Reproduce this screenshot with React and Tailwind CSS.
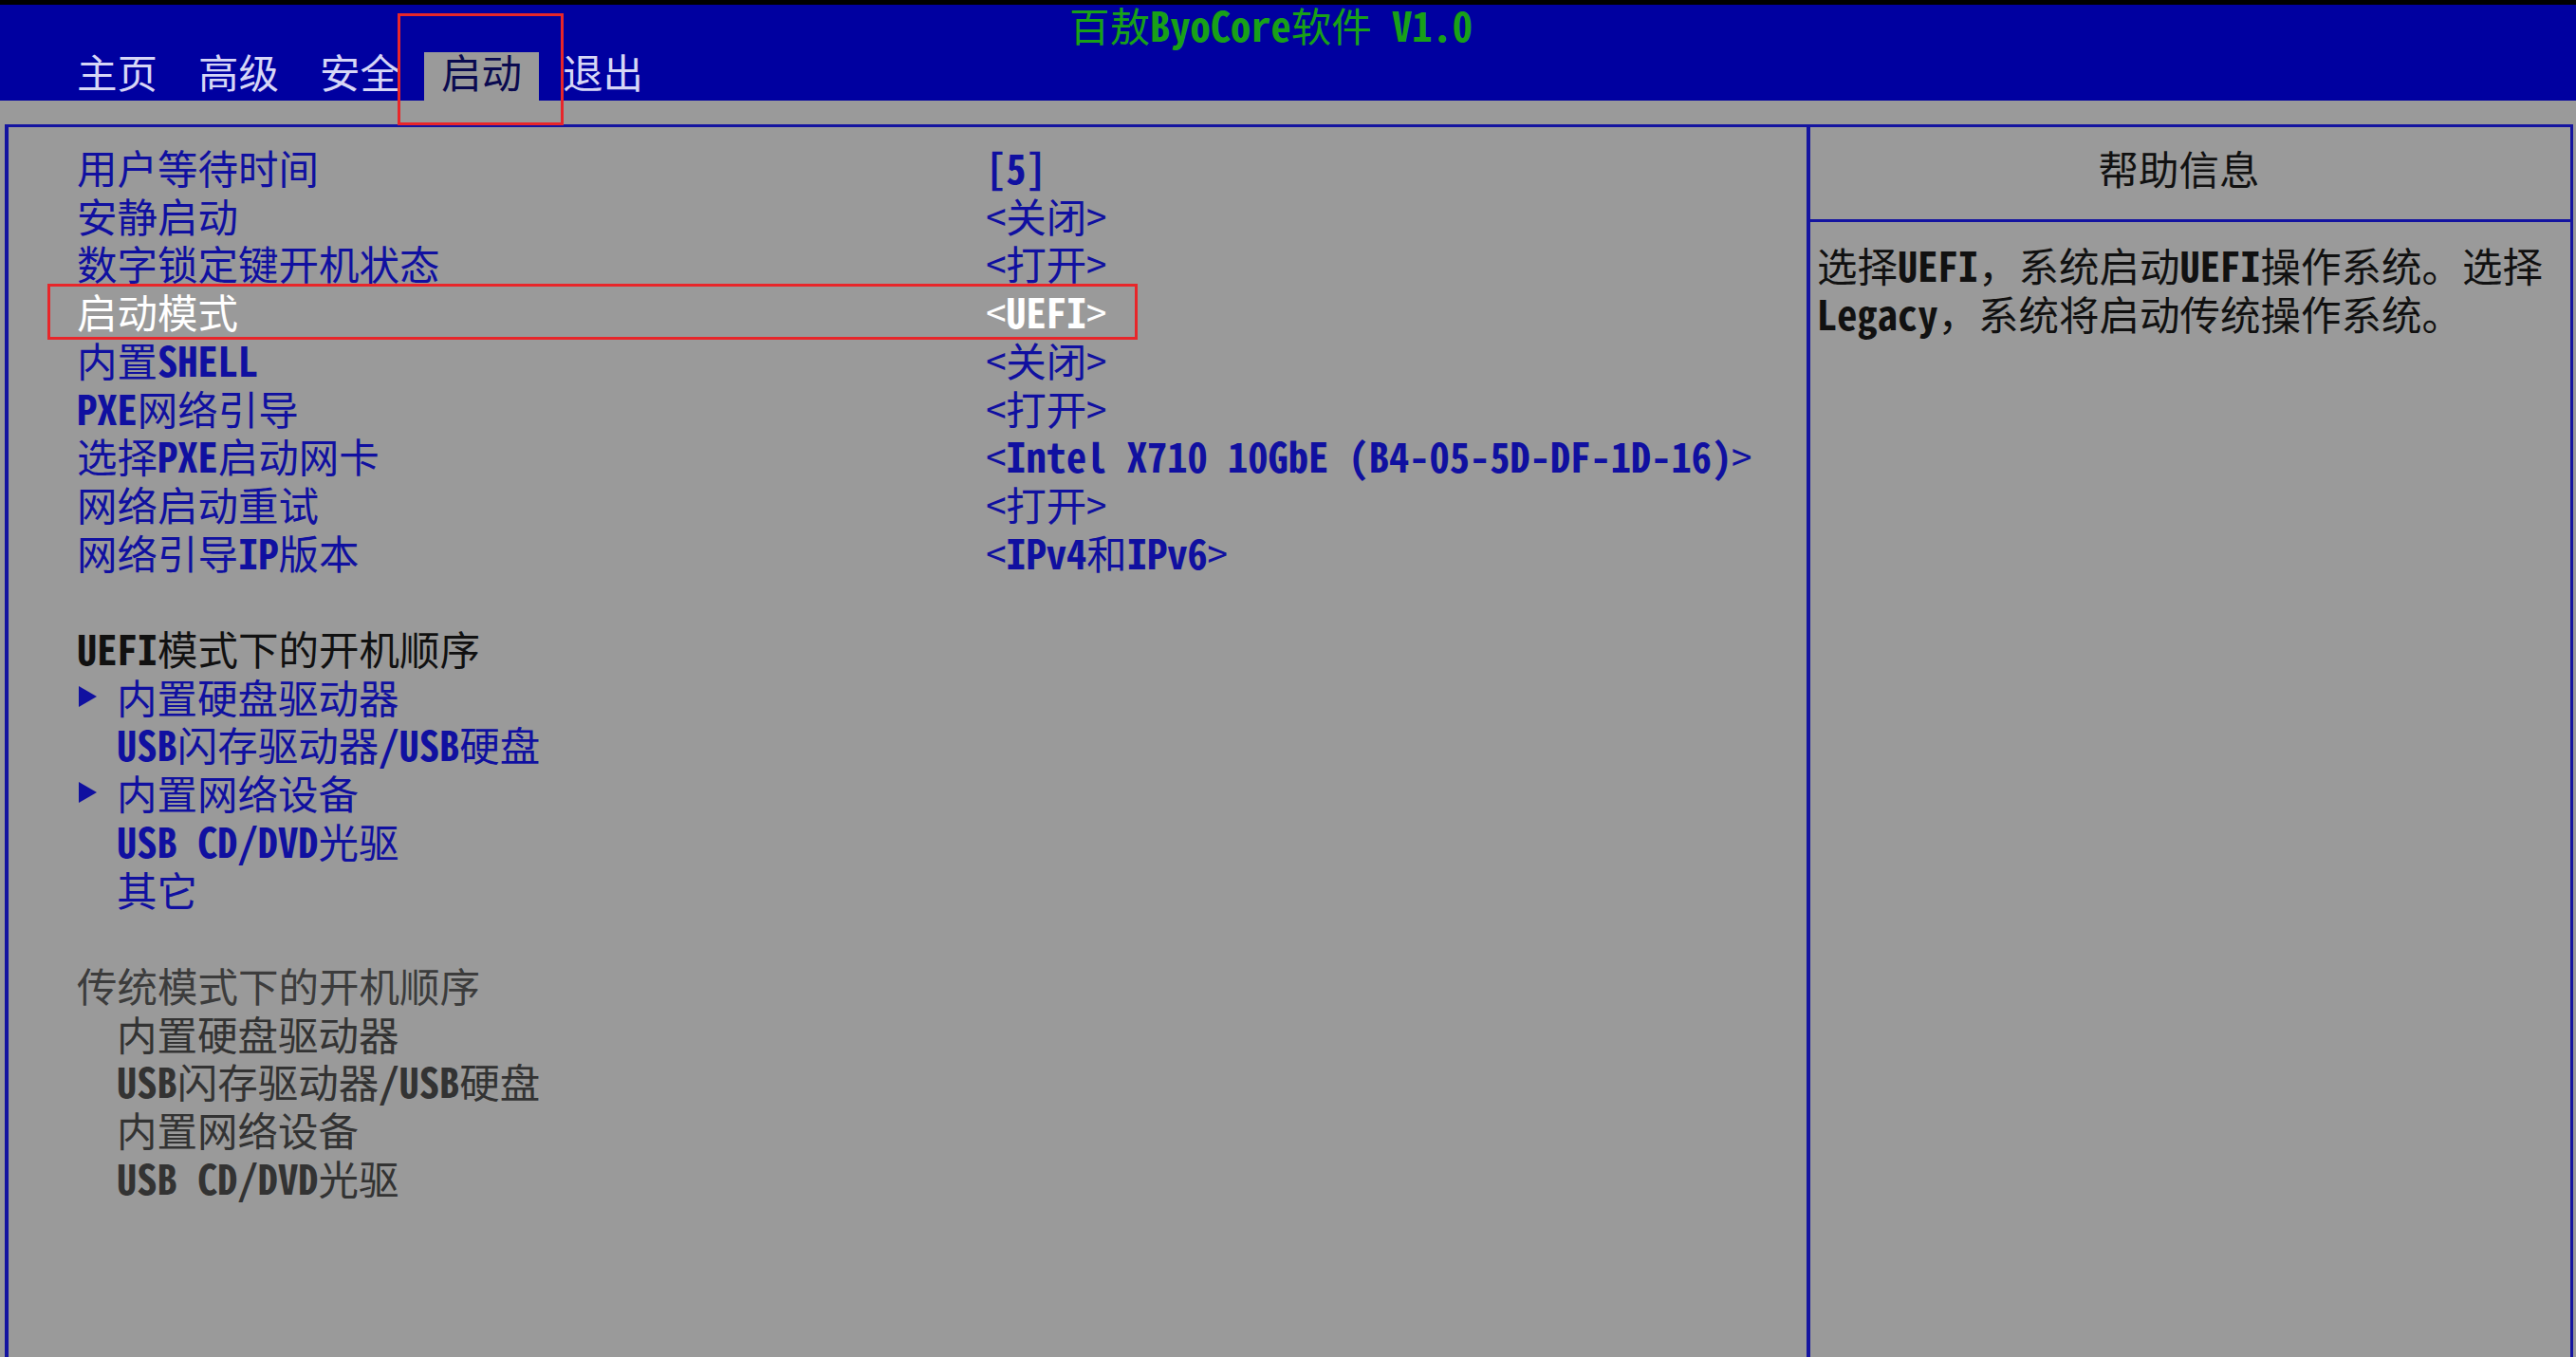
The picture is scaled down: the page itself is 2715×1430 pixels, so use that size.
import React from 'react';

const BLUE = 'text-[#1010a0]';

// ascii runs are drawn bold, like the bios bitmap font; angle brackets stay thin
function Txt({ s }) {
  const parts = s.split(/([\x20-\x3b\x3d\x3f-\x7e]+)/).filter(Boolean);
  return parts.map((p, i) =>
    /^[\x20-\x3b\x3d\x3f-\x7e]+$/.test(p) && p.trim() ? (
      <b key={i} className="font-bold">{p}</b>
    ) : (
      <span key={i}>{p}</span>
    )
  );
}

const settings = [
  { label: '用户等待时间', value: '[5]' },
  { label: '安静启动', value: '<关闭>' },
  { label: '数字锁定键开机状态', value: '<打开>' },
  { label: '启动模式', value: '<UEFI>', selected: true },
  { label: '内置SHELL', value: '<关闭>' },
  { label: 'PXE网络引导', value: '<打开>' },
  { label: '选择PXE启动网卡', value: '<Intel X710 10GbE (B4-05-5D-DF-1D-16)>' },
  { label: '网络启动重试', value: '<打开>' },
  { label: '网络引导IP版本', value: '<IPv4和IPv6>' },
];

const uefiOrder = [
  { name: '内置硬盘驱动器', arrow: true },
  { name: 'USB闪存驱动器/USB硬盘' },
  { name: '内置网络设备', arrow: true },
  { name: 'USB CD/DVD光驱' },
  { name: '其它' },
];

const legacyOrder = ['内置硬盘驱动器', 'USB闪存驱动器/USB硬盘', '内置网络设备', 'USB CD/DVD光驱'];

const tabs = ['主页', '高级', '安全', '启动', '退出'];

function Arrow() {
  return (
    <svg width="20" height="22" viewBox="0 0 20 22" className="shrink-0 ml-[2px]">
      <polygon points="0,0 19,11 0,22" fill="#1010a0" />
    </svg>
  );
}

export default function App() {
  return (
    <div className="relative w-[2715px] h-[1430px] overflow-hidden bg-[#9a9a9a] font-['Noto_Sans_Mono_CJK_SC','Noto_Sans_CJK_SC',monospace] text-[42.5px] leading-[50.7px]">
      <div className="h-[5px] bg-black" />

      {/* header */}
      <header className="h-[101px] bg-[#0000a0] flex flex-col justify-between">
        <div className="pl-[1127px] leading-[42px] text-[#18a018]">
          <Txt s="百敖ByoCore软件 V1.0" />
        </div>
        <nav className="flex items-end gap-[7px] pl-[63px]">
          {tabs.map(t => (
            <div
              key={t}
              className={`h-[51px] px-[18px] leading-[39px] ${
                t === '启动' ? 'bg-[#9a9a9a] text-[#0a0a50]' : 'text-[#d6d6f6]'
              }`}
            >
              {t}
            </div>
          ))}
        </nav>
      </header>

      <div className="h-[25px]" />

      {/* main frame */}
      <div className="ml-[5px] mr-[3px] h-[1299px] flex border-t-[3px] border-l-[4px] border-r-[3px] border-[#1414a0]">
        <div className="w-[1895px] pl-[72px] pt-[17px]">
          {settings.map(r => (
            <div
              key={r.label}
              className={`grid grid-cols-[958px_1fr] ${r.selected ? 'text-white' : BLUE}`}
            >
              <div><Txt s={r.label} /></div>
              <div className="whitespace-pre"><Txt s={r.value} /></div>
            </div>
          ))}

          <div className="h-[50.7px]" />
          <div className="text-[#111111]"><Txt s="UEFI模式下的开机顺序" /></div>
          {uefiOrder.map(o => (
            <div key={o.name} className={`flex items-center ${BLUE}`}>
              <div className="w-[42px] flex items-center">{o.arrow && <Arrow />}</div>
              <div className="whitespace-pre"><Txt s={o.name} /></div>
            </div>
          ))}

          <div className="h-[50.7px]" />
          <div className="text-[#3c3c3c]">传统模式下的开机顺序</div>
          {legacyOrder.map(n => (
            <div key={n} className="pl-[42px] text-[#333333] whitespace-pre">
              <Txt s={n} />
            </div>
          ))}
        </div>

        {/* help panel */}
        <aside className="flex-1 border-l-[4px] border-[#1414a0] flex flex-col">
          <div className="h-[100px] pt-[18px] pr-[24px] text-center text-[#111111] border-b-[3px] border-[#1414a0]">
            帮助信息
          </div>
          <div className="pl-[7px] pt-[20px] text-[#111111] whitespace-nowrap">
            <div><Txt s="选择UEFI，系统启动UEFI操作系统。选择" /></div>
            <div><Txt s="Legacy，系统将启动传统操作系统。" /></div>
          </div>
        </aside>
      </div>

      {/* red annotation frames */}
      <div className="absolute left-[419px] top-[14px] w-[175px] h-[118px] border-[3px] border-[#e8262a]" />
      <div className="absolute left-[50px] top-[299px] w-[1149px] h-[59px] border-[3px] border-[#e8262a]" />
    </div>
  );
}
